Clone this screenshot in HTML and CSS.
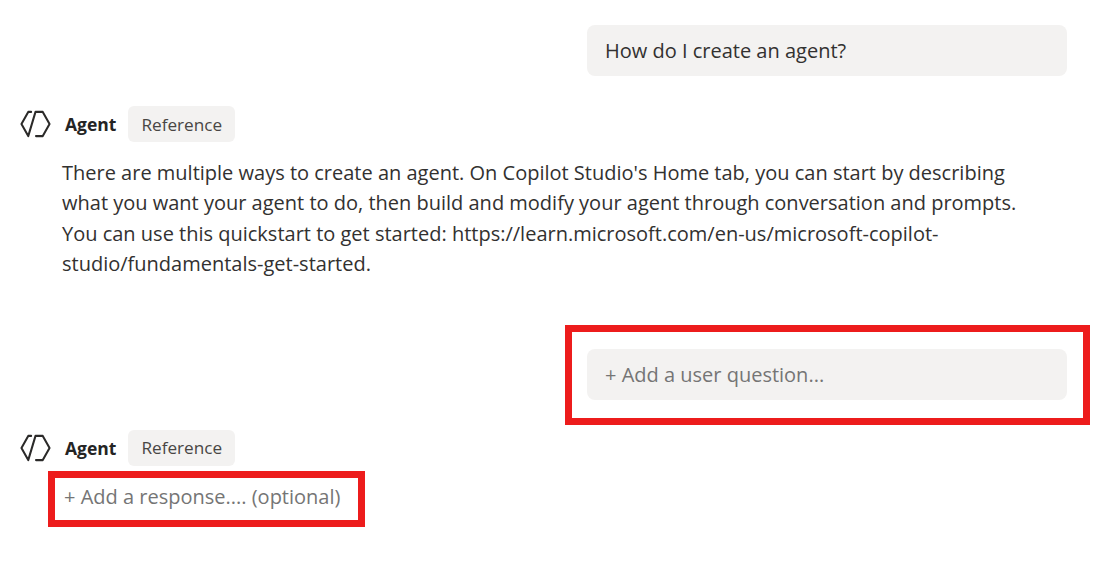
FILE: index.html
```html
<!DOCTYPE html>
<html lang="en">
<head>
<meta charset="utf-8">
<title>Agent test</title>
<link rel="stylesheet" href="styles.css">
</head>
<body>
<main class="chat">
  <div class="bubble">How do I create an agent?</div>
  <div class="agent-row first">
    <svg class="agent-icon" viewBox="0 0 32 28" aria-hidden="true"><path d="M11.500 1.500H8.500L1.500 14 8.500 26.500M8.500 26.500 16 1.500H23.500L30.500 14 23.500 26.500H16.500" /></svg>
    <span class="agent-name">Agent</span>
    <span class="tag">Reference</span>
  </div>
  <p class="answer">There are multiple ways to create an agent. On Copilot Studio's Home tab, you can start by describing what you want your agent to do, then build and modify your agent through conversation and prompts. You can use this quickstart to get started: https://learn.microsoft.com/en-us/microsoft-copilot-studio/fundamentals-get-started.</p>
  <div class="bubble placeholder second">+ Add a user question...</div>
  <div class="agent-row third">
    <svg class="agent-icon" viewBox="0 0 32 28" aria-hidden="true"><path d="M11.500 1.500H8.500L1.500 14 8.500 26.500M8.500 26.500 16 1.500H23.500L30.500 14 23.500 26.500H16.500" /></svg>
    <span class="agent-name">Agent</span>
    <span class="tag">Reference</span>
  </div>
  <p class="response placeholder">+ Add a response.... (optional)</p>
</main>
<div class="callout callout-question"></div>
<div class="callout callout-response"></div>
</body>
</html>
```
FILE: styles.css
```css
* { box-sizing: border-box; }
html, body { margin: 0; background: #fff; }
body {
  position: relative;
  width: 1103px;
  height: 567px;
  overflow: hidden;
  font-family: "Open Sans", "Noto Sans", sans-serif;
  color: #323130;
}
.chat {
  display: flex;
  flex-direction: column;
  padding: 25px 36px 0 20px;
}
.bubble {
  align-self: flex-end;
  flex: none;
  width: 480px;
  height: 51px;
  display: flex;
  align-items: center;
  padding: 0 18px;
  background: #f3f2f1;
  border-radius: 8px;
  font-size: 20px;
}
.second { margin-top: 69px; }
.agent-row {
  display: flex;
  align-items: center;
  height: 36px;
  flex: none;
}
.first { margin-top: 30px; }
.third { margin-top: 30px; }
.agent-icon {
  flex: none;
  width: 31px;
  height: 28px;
  fill: none;
  stroke: #2b2a29;
  stroke-width: 2.100;
  stroke-linejoin: round;
  stroke-linecap: round;
}
.agent-name {
  margin-left: 14px;
  font-size: 17.500px;
  font-weight: 700;
  color: #242424;
}
.tag {
  margin-left: 12px;
  height: 36px;
  display: flex;
  align-items: center;
  padding: 0 13px;
  background: #f3f2f1;
  border-radius: 6px;
  font-size: 17.200px;
  color: #484644;
}
.answer {
  margin: 16px 0 0 42px;
  width: 975px;
  font-size: 20px;
  line-height: 30.400px;
}
.response {
  margin: 16px 0 0 44px;
  font-size: 20px;
  line-height: 30px;
}
.placeholder { color: #757575; }
.callout {
  position: absolute;
  border: 7px solid #ed1c1c;
}
.callout-question { left: 565px; top: 325px; width: 525px; height: 100px; }
.callout-response { left: 48px; top: 471px; width: 317px; height: 56px; }
```
